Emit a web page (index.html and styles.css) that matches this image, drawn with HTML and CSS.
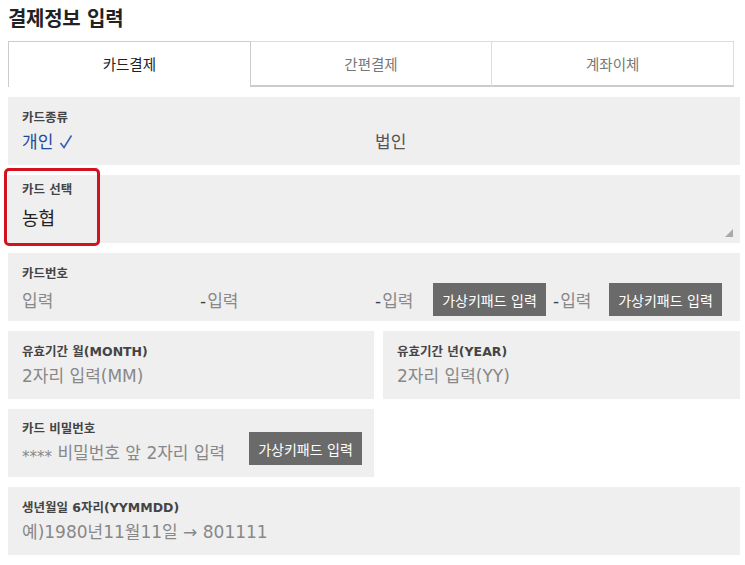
FILE: index.html
```html
<!DOCTYPE html>
<html lang="ko">
<head>
    <meta charset="UTF-8">
    <title>결제정보 입력</title>
    <link rel="stylesheet" href="styles.css">
</head>
<body>
    <div class="wrap">
        <h2 class="title">결제정보 입력</h2>

        <div class="tabs">
            <div class="tab active">카드결제</div>
            <div class="tab">간편결제</div>
            <div class="tab">계좌이체</div>
        </div>

        <div class="form">
            <div class="field">
                <div class="label">카드종류</div>
                <div class="kind">
                    <span class="opt on">개인
                        <svg class="check" width="14" height="15" viewBox="0 0 14 15"><path d="M1.5 9 L5 13.5 L12.5 1.5" fill="none" stroke="#3b63b3" stroke-width="1.6"/></svg>
                    </span>
                    <span class="opt off">법인</span>
                </div>
            </div>

            <div class="field select">
                <div class="label">카드 선택</div>
                <div class="value dark">농협</div>
                <span class="grip"></span>
                <span class="mark"></span>
            </div>

            <div class="field num">
                <div class="label">카드번호</div>
                <div class="num-row">
                    <span class="part p1">입력</span>
                    <span class="part p2"><i>-</i>입력</span>
                    <span class="part p3"><i>-</i>입력</span>
                    <button class="key">가상키패드 입력</button>
                    <span class="part p4"><i>-</i>입력</span>
                    <button class="key">가상키패드 입력</button>
                </div>
            </div>

            <div class="half">
                <div class="field">
                    <div class="label">유효기간 월(MONTH)</div>
                    <div class="value">2자리 입력(MM)</div>
                </div>
                <div class="field">
                    <div class="label">유효기간 년(YEAR)</div>
                    <div class="value">2자리 입력(YY)</div>
                </div>
            </div>

            <div class="half">
                <div class="field pw">
                    <div class="pw-text">
                        <div class="label">카드 비밀번호</div>
                        <div class="value"><span class="stars">****</span> 비밀번호 앞 2자리 입력</div>
                    </div>
                    <button class="key">가상키패드 입력</button>
                </div>
            </div>

            <div class="field">
                <div class="label">생년월일 6자리(YYMMDD)</div>
                <div class="value">예)1980년11월11일 → 801111</div>
            </div>
        </div>
    </div>
</body>
</html>
```

FILE: styles.css
```css
body {
    margin: 0;
    background: #fff;
    font-family: "DejaVu Sans", "Noto Sans CJK KR", sans-serif;
    color: #333;
}
.wrap {
    width: 732px;
    padding: 0 5px 0 8px;
}
.title {
    margin: 0;
    height: 41px;
    line-height: 38px;
    font-size: 20px;
    font-weight: bold;
    color: #222;
    letter-spacing: -0.3px;
}
.tabs {
    display: flex;
    width: 726px;
    height: 46px;
}
.tab {
    flex: 1;
    box-sizing: border-box;
    border-top: 1px solid #ddd;
    border-right: 1px solid #ddd;
    border-bottom: 2px solid #ccc;
    text-align: center;
    line-height: 46px;
    font-size: 14.5px;
    color: #777;
}
.tab.active {
    border: 1px solid #ccc;
    border-bottom: none;
    color: #222;
}
.form {
    display: flex;
    flex-direction: column;
    gap: 10px;
    margin-top: 10px;
}
.field {
    position: relative;
    box-sizing: border-box;
    height: 68px;
    background: #efefef;
    padding: 12px 14px 0;
}
.label {
    font-size: 12.5px;
    font-weight: bold;
    line-height: 18px;
    color: #444;
}
.value {
    margin-top: 3px;
    font-size: 17px;
    line-height: 24px;
    color: #888;
}
.value.dark {
    color: #222;
    margin-top: 8px;
    font-size: 18px;
}
.stars {
    font-size: 15px;
    vertical-align: -3px;
}
.kind {
    display: flex;
    margin-top: 3px;
    font-size: 17px;
    line-height: 24px;
}
.opt.on {
    width: 353px;
    color: #1f4a99;
}
.opt.off {
    color: #555;
}
.check {
    vertical-align: -1px;
}
.select {
    padding-top: 6px;
}
.select .grip {
    position: absolute;
    right: 7px;
    bottom: 6px;
    width: 0;
    height: 0;
    border-left: 8px solid transparent;
    border-bottom: 8px solid #aaa;
}
.mark {
    position: absolute;
    left: -4px;
    top: -7px;
    width: 96px;
    height: 78px;
    box-sizing: border-box;
    border: 3px solid #d4111e;
    border-radius: 5px;
}
.num-row {
    display: flex;
    align-items: center;
    height: 33px;
    font-size: 17px;
    color: #888;
}
.part i {
    font-style: normal;
    color: #444;
    margin-right: 1px;
}
.p1 { width: 178px; }
.p2 { width: 175px; }
.p3 { width: 58px; }
.p4 { width: 56px; margin-left: 7px; }
.key {
    width: 113px;
    height: 33px;
    border: none;
    padding: 0;
    background: #6a6a6a;
    color: #fff;
    font-family: "DejaVu Sans", "Noto Sans CJK KR", sans-serif;
    font-size: 14px;
}
.half {
    display: grid;
    grid-template-columns: 366px 1fr;
    gap: 9px;
}
.pw {
    display: flex;
    align-items: flex-end;
    justify-content: space-between;
    padding: 11px 12px 12px 14px;
}
.pw .pw-text {
    align-self: flex-start;
}
```
